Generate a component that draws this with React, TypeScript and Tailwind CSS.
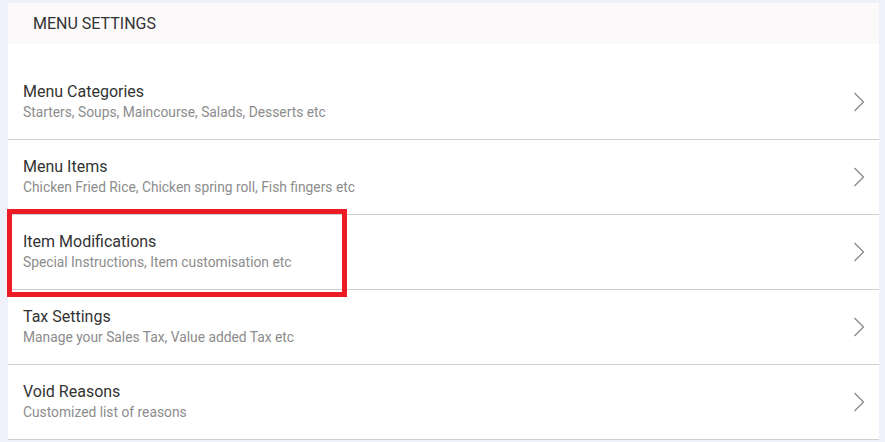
const items = [
  { title: 'Menu Categories', sub: 'Starters, Soups, Maincourse, Salads, Desserts etc' },
  { title: 'Menu Items', sub: 'Chicken Fried Rice, Chicken spring roll, Fish fingers etc' },
  { title: 'Item Modifications', sub: 'Special Instructions, Item customisation etc', marked: true },
  { title: 'Tax Settings', sub: 'Manage your Sales Tax, Value added Tax etc' },
  { title: 'Void Reasons', sub: 'Customized list of reasons' },
];

function Chevron() {
  return (
    <svg width="12" height="20" viewBox="0 0 12 20" className="shrink-0">
      <polyline points="1.5,1 10.5,10 1.5,19" fill="none" stroke="#8a8a8a" strokeWidth="1.3" />
    </svg>
  );
}

export default function App() {
  return (
    <div className="min-h-[442px] bg-[#eef1f9] pt-[3px] pl-2 pr-[6px] font-['Roboto',sans-serif]">
      <div className="bg-white">
        {/* Header */}
        <div className="flex h-[41px] items-center bg-[#fcf9fa] pl-[25px] text-[16px] text-[#333]">
          MENU SETTINGS
        </div>

        <div className="pt-[21px]">
          {items.map((it) => (
            <div key={it.title} className="relative">
              <div className="flex h-[75px] items-center justify-between border-b border-[#cfcfcf] pl-[15px] pr-[14px]">
                <div className="mb-[2px] flex flex-col">
                  <span className="text-[16px] leading-[21px] text-[#333]">{it.title}</span>
                  <span className="text-[13.8px] leading-[20px] text-[#8c8c8c]">{it.sub}</span>
                </div>
                <Chevron />
              </div>
              {it.marked && (
                <div className="pointer-events-none absolute -left-px top-[-6px] h-[88px] w-[340px] border-[5px] border-[#ed1c24]" />
              )}
            </div>
          ))}
        </div>
      </div>
    </div>
  );
}
